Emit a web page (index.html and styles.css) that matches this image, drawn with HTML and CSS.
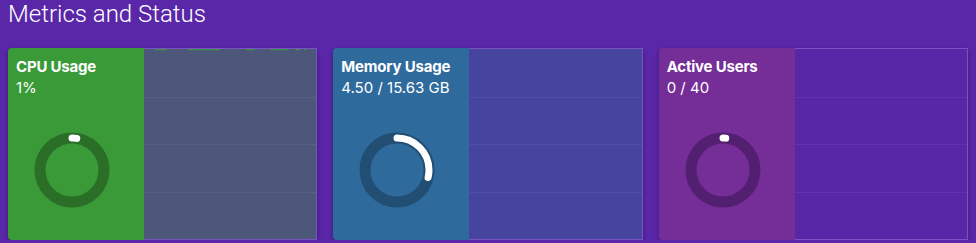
FILE: index.html
```html
<!DOCTYPE html>
<html lang="en">
<head>
    <meta charset="UTF-8">
    <meta name="viewport" content="width=device-width, initial-scale=1.0">
    <title>Metrics and Status</title>
    <link rel="stylesheet" href="styles.css">
</head>
<body>

<h2 class="page-title">Metrics and Status</h2>

<div class="metrics">
    <div class="card cpu">
        <div class="panel">
            <div class="label">CPU Usage</div>
            <div class="value">1%</div>
            <svg class="donut" viewBox="0 0 80 80">
                <circle class="track" cx="40" cy="40" r="32"></circle>
                <circle class="bar" cx="40" cy="40" r="32" pathLength="100" stroke-dasharray="2.4 100"></circle>
            </svg>
        </div>
        <div class="chart">
            <svg class="series" viewBox="0 0 172 4" preserveAspectRatio="none">
                <path d="M11 0.5H23M44 0.5H76M102 0.5H111M126 0.5H144M151 0.5H156M160 0.5H162"></path>
            </svg>
            <div class="row"></div>
            <div class="row"></div>
            <div class="row"></div>
            <div class="row"></div>
        </div>
    </div>

    <div class="card memory">
        <div class="panel">
            <div class="label">Memory Usage</div>
            <div class="value">4.50 / 15.63 GB</div>
            <svg class="donut" viewBox="0 0 80 80">
                <circle class="track" cx="40" cy="40" r="32"></circle>
                <circle class="bar" cx="40" cy="40" r="32" pathLength="100" stroke-dasharray="28.8 100"></circle>
            </svg>
        </div>
        <div class="chart">
            <div class="row"></div>
            <div class="row"></div>
            <div class="row"></div>
            <div class="row"></div>
        </div>
    </div>

    <div class="card users">
        <div class="panel">
            <div class="label">Active Users</div>
            <div class="value">0 / 40</div>
            <svg class="donut" viewBox="0 0 80 80">
                <circle class="track" cx="40" cy="40" r="32"></circle>
                <circle class="bar" cx="40" cy="40" r="32" pathLength="100" stroke-dasharray="1.4 100"></circle>
            </svg>
        </div>
        <div class="chart">
            <div class="row"></div>
            <div class="row"></div>
            <div class="row"></div>
            <div class="row"></div>
        </div>
    </div>
</div>

</body>
</html>
```

FILE: styles.css
```css
body {
    margin: 0;
    padding: 0 8px;
    background-color: #5927a8; /* Page purple */
    color: #ffffff;
    font-family: Inter, "Open Sans", sans-serif;
}
.page-title {
    margin: 0;
    height: 48px;
    font-family: Roboto, sans-serif;
    font-weight: 300;
    font-size: 24px;
    line-height: 28px;
}
.metrics {
    display: grid;
    grid-template-columns: repeat(3, 1fr);
    gap: 16px;
}
.card {
    display: flex;
    height: 192px;
    border-radius: 4px;
    box-shadow: 0 2px 4px rgba(0, 0, 0, 0.35);
}
.panel {
    width: 136px;
    padding: 8px;
    box-sizing: border-box;
    border-radius: 4px 0 0 4px;
}
.label {
    font-size: 15px;
    font-weight: 700;
    line-height: 21px;
    letter-spacing: -0.2px;
}
.value {
    font-size: 15px;
    line-height: 21px;
}
.donut {
    display: block;
    width: 80px;
    height: 80px;
    margin: 32px 0 0 16px;
    transform: rotate(-90deg);
}
.donut circle {
    fill: none;
}
.donut .track {
    stroke-width: 11;
}
.donut .bar {
    stroke: #ffffff;
    stroke-width: 7;
    stroke-linecap: round;
}
.chart {
    flex: 1;
    position: relative;
    display: grid;
    grid-template-rows: repeat(4, 1fr);
    border: 1px solid #7b52c4;
    border-left: none;
}
.row + .row {
    border-top: 1px solid rgba(255, 255, 255, 0.06);
}
.series {
    position: absolute;
    top: 0;
    left: 0;
    width: 100%;
    height: 4px;
}
.series path {
    stroke: #3f8f48;
    stroke-width: 1.4;
    fill: none;
}

/* card colours */
.cpu .panel { background-color: #3a9a38; }
.cpu .track { stroke: #2a6e27; }
.cpu .chart { background-color: #4c5779; }

.memory .panel { background-color: #2e6a9c; }
.memory .track { stroke: #224e74; }
.memory .chart { background-color: #46449f; }

.users .panel { background-color: #752d97; }
.users .track { stroke: #521f71; }
.users .chart { background-color: #5827a8; }
```
